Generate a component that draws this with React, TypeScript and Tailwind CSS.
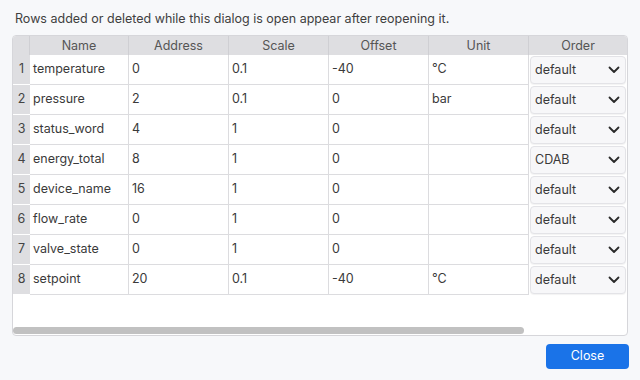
import React from "react";

const rows = [
  ["temperature", "0", "0.1", "-40", "°C", "default"],
  ["pressure", "2", "0.1", "0", "bar", "default"],
  ["status_word", "4", "1", "0", "", "default"],
  ["energy_total", "8", "1", "0", "", "CDAB"],
  ["device_name", "16", "1", "0", "", "default"],
  ["flow_rate", "0", "1", "0", "", "default"],
  ["valve_state", "0", "1", "0", "", "default"],
  ["setpoint", "20", "0.1", "-40", "°C", "default"],
];

const headers = ["Name", "Address", "Scale", "Offset", "Unit", "Order"];
const cols = "grid grid-cols-[17px_99px_100px_100px_100px_100px_98px]";

function Chevron() {
  return (
    <svg width="12" height="8" viewBox="0 0 12 8" fill="none">
      <path d="M1.5 1.5 L6 6 L10.5 1.5" stroke="#2a2a2a" strokeWidth="1.8" strokeLinecap="round" strokeLinejoin="round" />
    </svg>
  );
}

export default function App() {
  return (
    <div
      className="w-[640px] h-[380px] bg-[#f7f8fa] text-[12.5px] text-[#3a3a3a] flex flex-col overflow-hidden"
      style={{ fontFamily: "Inter, 'Noto Sans', sans-serif" }}
    >
      <div className="px-[15px] pt-[10px] h-[35px] leading-[18px] text-[#404040]">
        Rows added or deleted while this dialog is open appear after reopening it.
      </div>
      <div className="ml-[12px] w-[616px] h-[301px] border border-[#d6d6da] rounded-[4px] bg-white overflow-hidden flex flex-col">
        <div className={`${cols} h-[19px] bg-[#dedee1] text-[#555] leading-[19px]`}>
          <div className="border-r border-[#cfcfd3]" />
          {headers.map((h, i) => (
            <div key={h} className={`text-center ${i < 5 ? "border-r border-[#cfcfd3]" : ""}`}>
              {h}
            </div>
          ))}
        </div>
        {rows.map((r, ri) => (
          <div key={ri} className={`${cols} h-[30px]`}>
            <div className="bg-[#dedee1] flex items-center justify-center text-[#444] border-b border-white">
              {ri + 1}
            </div>
            {r.slice(0, 5).map((c, ci) => (
              <div key={ci} className="border-r border-b border-[#dcdcdf] flex items-center px-[3px]">
                {c}
              </div>
            ))}
            <div className="p-[1px]">
              <div className="h-full rounded-[4px] bg-[#f7f7f9] border border-[#e3e3e7] shadow-[0_1px_1px_rgba(0,0,0,0.05)] flex items-center justify-between pl-[4px] pr-[5px]">
                <span>{r[5]}</span>
                <Chevron />
              </div>
            </div>
          </div>
        ))}
        <div className="flex-1" />
        <div className="h-[7px] mb-[1px]">
          <div className="w-[511px] h-[7px] rounded-full bg-[#c1c1c1]" />
        </div>
      </div>
      <div className="flex justify-end pr-[11px] pt-[8px]">
        <button className="w-[83px] h-[25px] rounded-[4px] bg-[#1a73e8] text-white text-[12.5px]">Close</button>
      </div>
    </div>
  );
}
